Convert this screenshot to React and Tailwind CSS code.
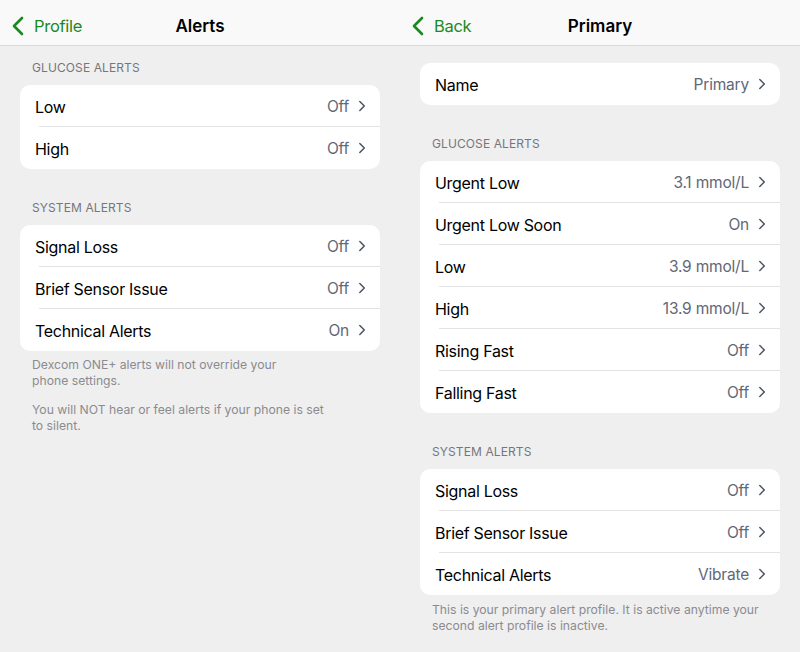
import React from "react";

const Chevron = () => (
  <svg width="8" height="12" viewBox="0 0 8 12" className="ml-[9px]">
    <path d="M1.8 1.5 L6.3 6 L1.8 10.5" fill="none" stroke="#4b5563" strokeWidth="1.5" strokeLinecap="round" strokeLinejoin="round" />
  </svg>
);

const BackChevron = () => (
  <svg width="12" height="20" viewBox="0 0 12 20">
    <path d="M10 2 L2 10 L10 18" fill="none" stroke="#1a8a1f" strokeWidth="2.6" strokeLinecap="round" strokeLinejoin="round" />
  </svg>
);

const Header = ({ back, title }) => (
  <div className="h-[46px] pt-[8px] bg-[#f9f9f9] border-b border-[#d9d9d9] relative flex items-center justify-center">
    <div className="absolute left-[12px] top-[7px] bottom-0 flex items-center gap-[10px] text-[#1a8a1f] text-[16.5px] tracking-[-0.3px]">
      <BackChevron />
      <span>{back}</span>
    </div>
    <span className="text-[17px] font-semibold text-black">{title}</span>
  </div>
);

const Row = ({ label, value, last }) => (
  <div className="h-[42px] flex items-center pl-[15px] relative">
    <span className="text-[16px] tracking-[-0.3px] text-black flex-1 pt-px">{label}</span>
    <span className="text-[15.5px] tracking-[-0.2px] text-[#5f6877] pt-px">{value}</span>
    <div className="w-[17px] flex"><Chevron /></div>
    <div className="w-[14px]" />
    {!last && <div className="absolute left-[19px] right-0 bottom-0 h-px bg-[#e3e3e3]" />}
  </div>
);

const Card = ({ rows }) => (
  <div className="mx-[20px] bg-white rounded-[10px] overflow-hidden">
    {rows.map((r, i) => (
      <Row key={r[0]} label={r[0]} value={r[1]} last={i === rows.length - 1} />
    ))}
  </div>
);

const SectionTitle = ({ children, className }) => (
  <div className={"px-[32px] text-[12px] text-[#76767b] uppercase tracking-[0.1px] " + className}>{children}</div>
);

const Note = ({ children, className }) => (
  <div className={"px-[32px] text-[12.2px] leading-[16px] text-[#8b8b8f] " + className}>{children}</div>
);

export default function App() {
  return (
    <div className="w-[800px] h-[652px] flex bg-[#efefef] overflow-hidden" style={{ fontFamily: "Inter, 'Noto Sans', sans-serif" }}>
      <div className="w-[400px] flex flex-col">
        <Header back="Profile" title="Alerts" />
        <SectionTitle className="mt-[14px] mb-[10px] leading-[15px]">Glucose Alerts</SectionTitle>
        <Card rows={[["Low", "Off"], ["High", "Off"]]} />
        <SectionTitle className="mt-[31px] mb-[10px] leading-[15px]">System Alerts</SectionTitle>
        <Card rows={[["Signal Loss", "Off"], ["Brief Sensor Issue", "Off"], ["Technical Alerts", "On"]]} />
        <Note className="mt-[6px] pr-[60px]">Dexcom ONE+ alerts will not override your<br />phone settings.</Note>
        <Note className="mt-[13px]">You will NOT hear or feel alerts if your phone is set<br />to silent.</Note>
      </div>
      <div className="w-[400px] flex flex-col">
        <Header back="Back" title="Primary" />
        <div className="mt-[17px]">
          <Card rows={[["Name", "Primary"]]} />
        </div>
        <SectionTitle className="mt-[31px] mb-[10px] leading-[15px]">Glucose Alerts</SectionTitle>
        <Card
          rows={[
            ["Urgent Low", "3.1 mmol/L"],
            ["Urgent Low Soon", "On"],
            ["Low", "3.9 mmol/L"],
            ["High", "13.9 mmol/L"],
            ["Rising Fast", "Off"],
            ["Falling Fast", "Off"],
          ]}
        />
        <SectionTitle className="mt-[31px] mb-[10px] leading-[15px]">System Alerts</SectionTitle>
        <Card rows={[["Signal Loss", "Off"], ["Brief Sensor Issue", "Off"], ["Technical Alerts", "Vibrate"]]} />
        <Note className="mt-[7px]">This is your primary alert profile. It is active anytime your<br />second alert profile is inactive.</Note>
      </div>
    </div>
  );
}
